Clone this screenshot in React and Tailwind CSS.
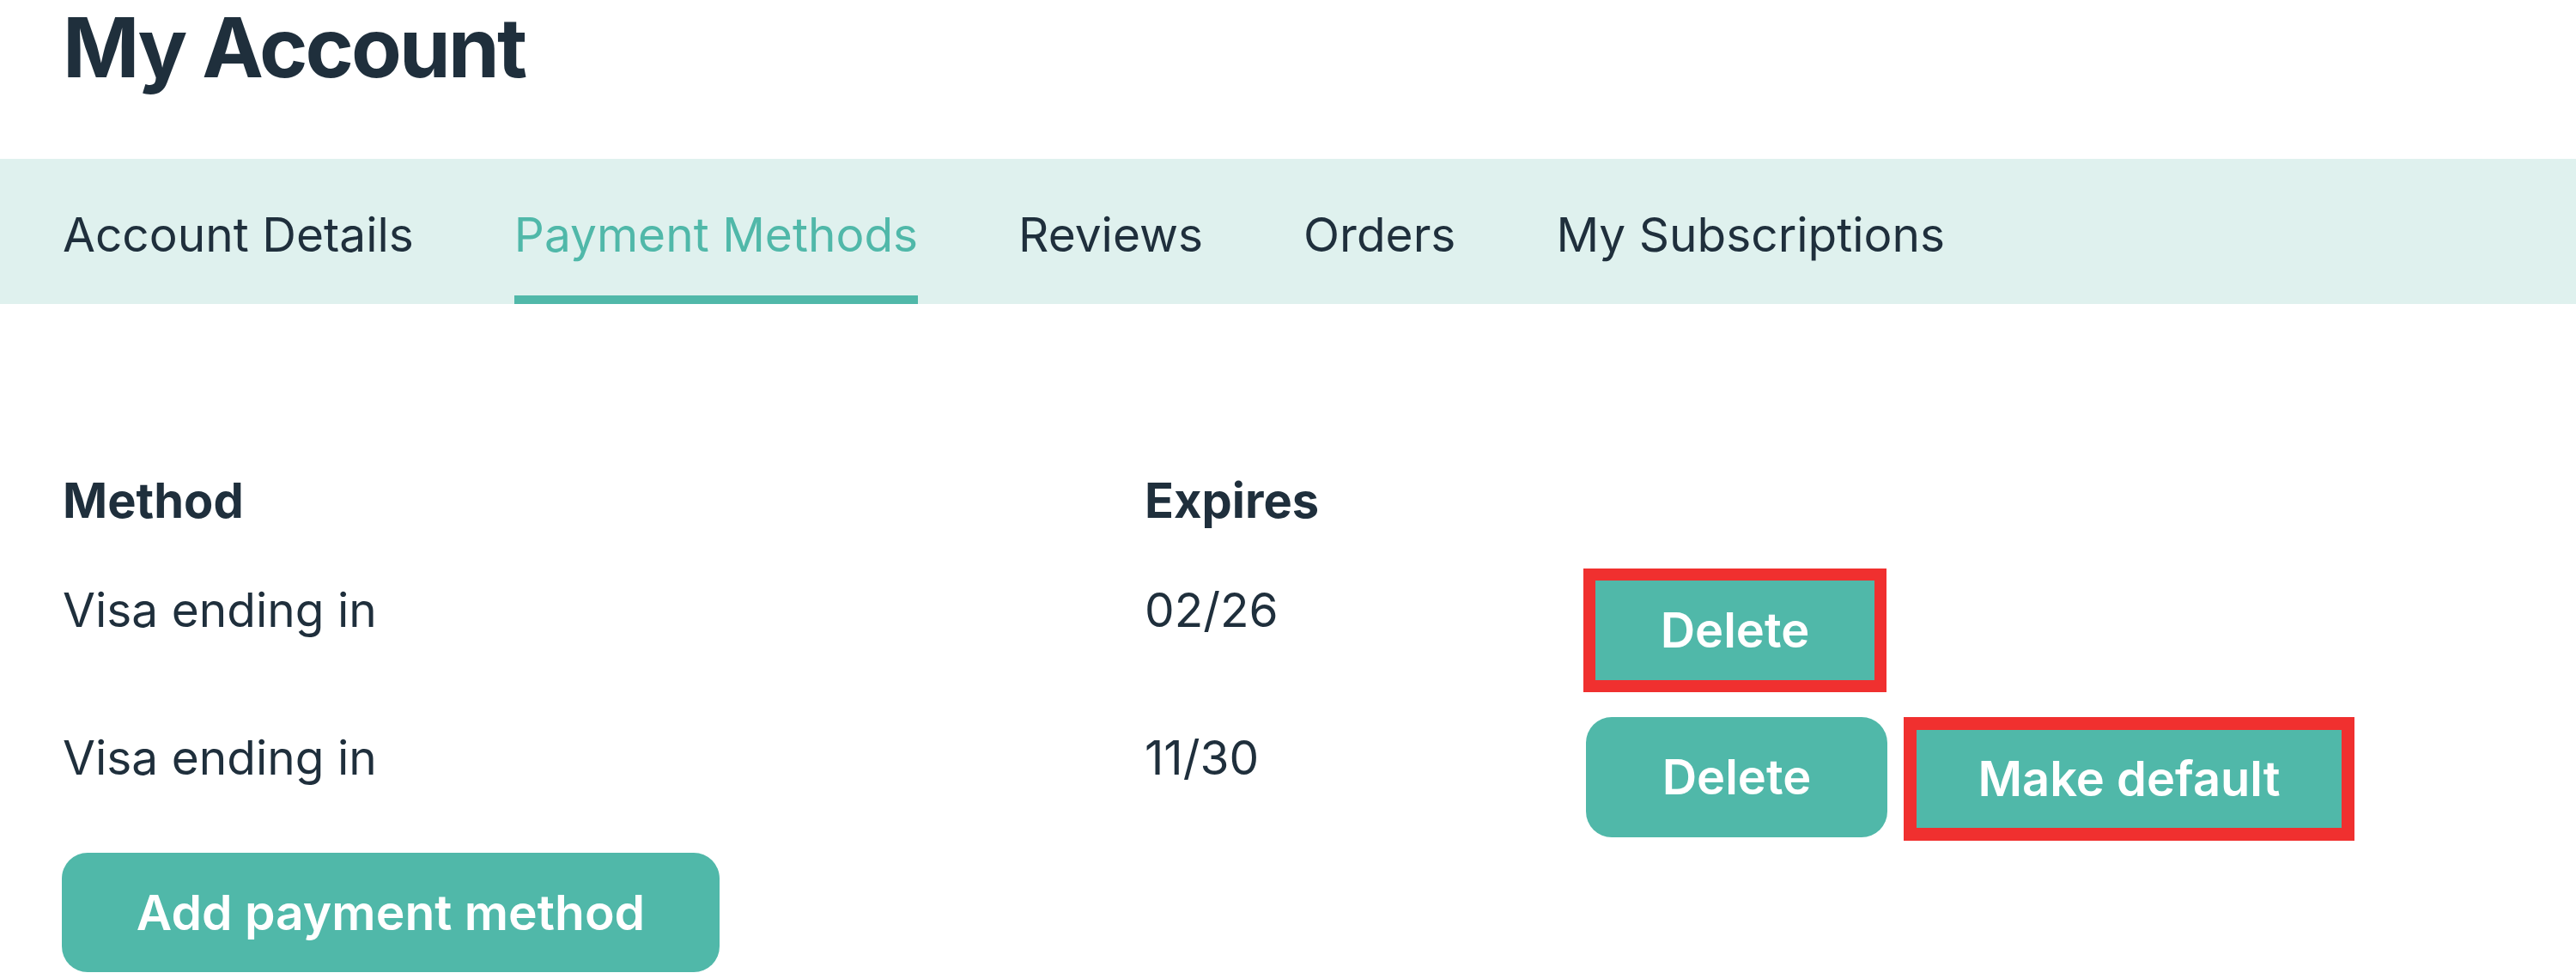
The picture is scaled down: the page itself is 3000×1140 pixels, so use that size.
export default function App() {
  const tabs = [
    { label: "Account Details", active: false },
    { label: "Payment Methods", active: true },
    { label: "Reviews", active: false },
    { label: "Orders", active: false },
    { label: "My Subscriptions", active: false },
  ];
  return (
    <div className="w-[3000px] h-[1140px] bg-white text-[#1f2f3c] font-['Inter','Noto_Sans',sans-serif] overflow-hidden">
      <h1 className="pl-[73px] text-[96px] leading-[110px] font-bold tracking-[-0.03em]">My Account</h1>

      <nav className="mt-[75px] h-[169px] bg-[#dff1ee] flex gap-[117px] px-[73px]">
        {tabs.map((t) =>
          t.active ? (
            <div
              key={t.label}
              className="flex items-center h-full pt-[16px] border-b-[10px] border-[#50b8a9] text-[#50b8a9] text-[55px] leading-[84px]"
            >
              {t.label}
            </div>
          ) : (
            <div
              key={t.label}
              className="flex items-center h-full pt-[16px] border-b-[10px] border-transparent text-[55px] leading-[84px]"
            >
              {t.label}
            </div>
          )
        )}
      </nav>

      <div className="pl-[73px] mt-[187px]">
        <div className="flex h-[84px] text-[56px] leading-[84px] font-bold">
          <div className="w-[1260px]">Method</div>
          <div className="w-[511px]">Expires</div>
        </div>

        <div className="flex items-start mt-[37px] text-[55px] leading-[84px]">
          <div className="w-[1260px] pt-[6px]">Visa ending in</div>
          <div className="w-[511px] pt-[6px]">02/26</div>
          <div className="flex gap-[19px]">
            <button className="w-[353px] h-[144px] border-[14px] border-[#f0302f] bg-[#50b8a9] text-white text-[56px] font-semibold flex items-center justify-center">
              Delete
            </button>
          </div>
        </div>

        <div className="flex items-start mt-[29px] text-[55px] leading-[84px]">
          <div className="w-[1260px] pt-[5px]">Visa ending in</div>
          <div className="w-[511px] pt-[5px]">11/30</div>
          <div className="flex items-start gap-[19px]">
            <button className="ml-[3px] w-[351px] h-[140px] rounded-[30px] bg-[#50b8a9] text-white text-[56px] font-semibold flex items-center justify-center">
              Delete
            </button>
            <button className="w-[525px] h-[144px] border-[15px] border-[#f0302f] bg-[#50b8a9] text-white text-[56px] font-semibold flex items-center justify-center">
              Make default
            </button>
          </div>
        </div>

        <button className="mt-[14px] -ml-[1px] w-[766px] h-[139px] rounded-[30px] bg-[#50b8a9] text-white text-[57px] font-semibold flex items-center justify-center">
          Add payment method
        </button>
      </div>
    </div>
  );
}
